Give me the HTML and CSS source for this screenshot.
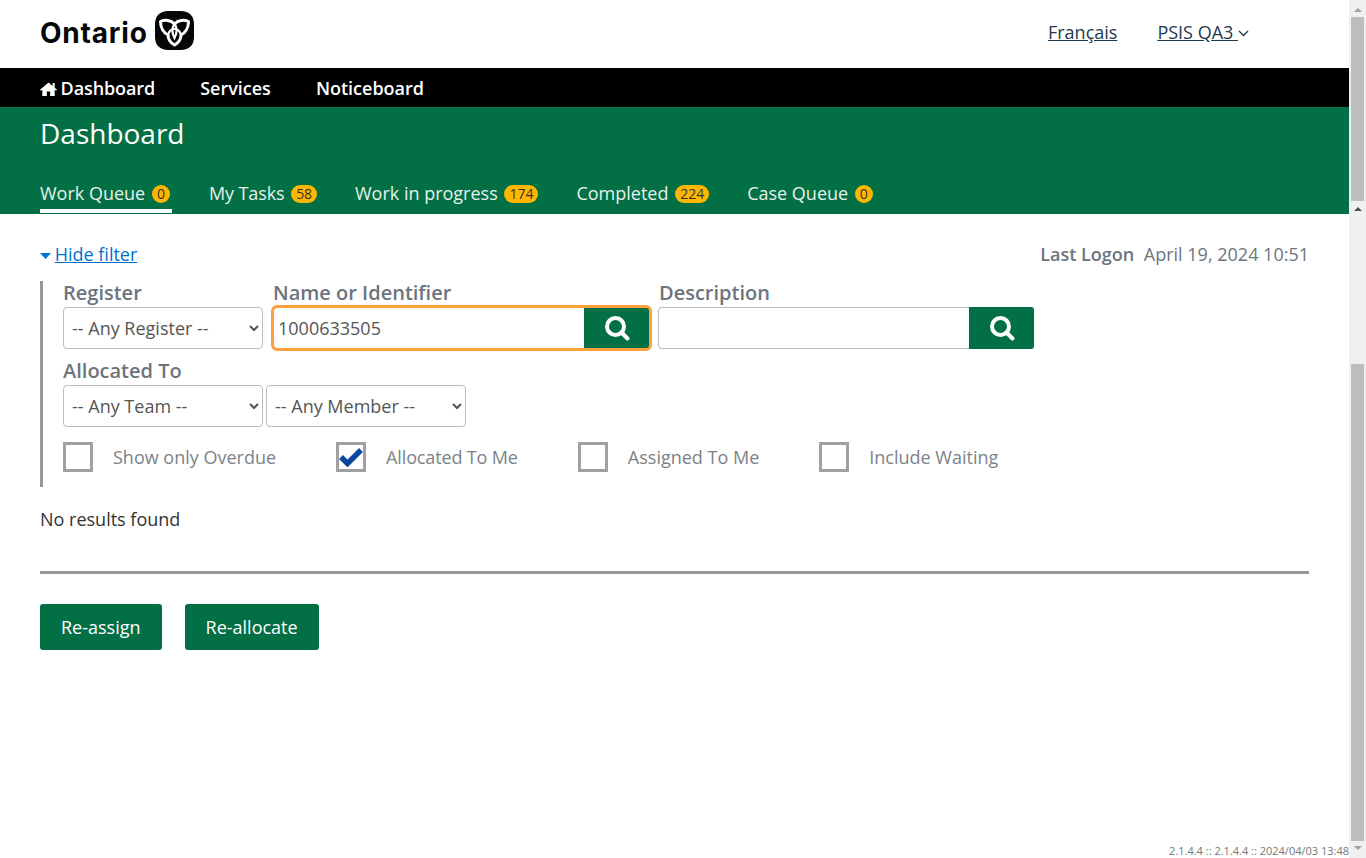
FILE: index.html
```html
<!DOCTYPE html>
<html lang="en">
<head>
    <meta charset="UTF-8">
    <meta name="viewport" content="width=device-width, initial-scale=1.0">
    <title>Dashboard</title>
    <link rel="stylesheet" href="styles.css">
</head>
<body>
<div class="page">
    <div class="main">
        <header class="top">
            <div class="logo">
                <span class="logo-word">Ontario</span>
                <svg class="logo-mark" width="39" height="39" viewBox="0 0 39 39">
                    <path d="M13 0h13c8 0 13 5 13 13v13c0 8-5 13-13 13H13C5 39 0 34 0 26V13C0 5 5 0 13 0z" fill="#060808"/>
                    <path d="M5.500 10.500C10 8.500 16 9 19.500 13 23 9 29 8.500 33.500 10.500 33.500 17 30 22 26 24 26 28 23 32 19.500 34 16 32 13 28 13 24 9 22 5.500 17 5.500 10.500z" fill="none" stroke="#fff" stroke-width="3" stroke-linejoin="round"/>
                    <path d="M13 24C14 20 17 18 19.500 18 22 18 25 20 26 24M19.500 13C17 16 16.500 21 19.500 27 22.500 21 22 16 19.500 13z" fill="none" stroke="#fff" stroke-width="2.200"/>
                </svg>
            </div>
            <div class="top-links">
                <a href="#">Français</a>
                <a href="#">PSIS QA3 <svg class="chev" width="11" height="7" viewBox="0 0 11 7"><path d="M1 1l4.500 4.500L10 1" fill="none" stroke="#1c3a50" stroke-width="1.400"/></svg></a>
            </div>
        </header>
        <nav class="nav">
            <a href="#" class="nav-home">
                <svg width="17" height="14" viewBox="0 0 17 14"><path d="M8.500 0.500L0 7.700l1 1.100 1.300-1.100V14h4.500V9.500h3.400V14h4.500V7.700l1.300 1.100 1-1.100-2.300-2V1h-2v3L8.500 0.500z" fill="#fff"/></svg>
                Dashboard
            </a>
            <a href="#">Services</a>
            <a href="#">Noticeboard</a>
        </nav>
        <section class="banner">
            <h1>Dashboard</h1>
            <div class="tabs">
                <a href="#" class="tab tab-active">Work Queue <span class="badge">0</span></a>
                <a href="#" class="tab tab-tight">My Tasks <span class="badge">58</span></a>
                <a href="#" class="tab">Work in progress <span class="badge">174</span></a>
                <a href="#" class="tab">Completed <span class="badge">224</span></a>
                <a href="#" class="tab">Case Queue <span class="badge">0</span></a>
            </div>
        </section>
        <section class="content">
            <div class="filter-head">
                <div class="toggle">
                    <svg width="11" height="6" viewBox="0 0 11 6"><path d="M0 0h11L5.500 6z" fill="#0071ce"/></svg>
                    <a href="#">Hide filter</a>
                </div>
                <div class="logon"><b>Last Logon</b> April 19, 2024 10:51</div>
            </div>
            <div class="filter">
                <div class="row">
                    <div class="field">
                        <label>Register</label>
                        <select><option>-- Any Register --</option></select>
                    </div>
                    <div class="field field-name">
                        <label>Name or Identifier</label>
                        <div class="search search-focus">
                            <input type="text" value="1000633505">
                            <button type="button" aria-label="Search">
                                <svg width="26" height="26" viewBox="0 0 26 26"><circle cx="11.500" cy="11.500" r="8.500" fill="none" stroke="#fff" stroke-width="4"/><path d="M17.500 17.500l6 6" stroke="#fff" stroke-width="4" stroke-linecap="round"/></svg>
                            </button>
                        </div>
                    </div>
                    <div class="field field-desc">
                        <label>Description</label>
                        <div class="search">
                            <input type="text">
                            <button type="button" aria-label="Search">
                                <svg width="26" height="26" viewBox="0 0 26 26"><circle cx="11.500" cy="11.500" r="8.500" fill="none" stroke="#fff" stroke-width="4"/><path d="M17.500 17.500l6 6" stroke="#fff" stroke-width="4" stroke-linecap="round"/></svg>
                            </button>
                        </div>
                    </div>
                </div>
                <div class="field alloc">
                    <label>Allocated To</label>
                    <div class="alloc-selects">
                        <select><option>-- Any Team --</option></select>
                        <select><option>-- Any Member --</option></select>
                    </div>
                </div>
                <div class="checks">
                    <div class="check"><span class="box"></span>Show only Overdue</div>
                    <div class="check check-tight"><span class="box"><svg width="24" height="20" viewBox="0 0 24 20"><path d="M2 10l6.500 6.500L22 3" fill="none" stroke="#0b46a0" stroke-width="5.500"/></svg></span>Allocated To Me</div>
                    <div class="check"><span class="box"></span>Assigned To Me</div>
                    <div class="check"><span class="box"></span>Include Waiting</div>
                </div>
            </div>
            <p class="empty">No results found</p>
            <hr>
            <div class="actions">
                <button type="button" class="btn">Re-assign</button>
                <button type="button" class="btn">Re-allocate</button>
            </div>
        </section>
        <div class="version">2.1.4.4 :: 2.1.4.4 :: 2024/04/03 13:48</div>
    </div>
    <div class="scrollbar">
        <div class="sb-top">
            <span class="arrow-up"></span>
            <div class="sb-thumb-top"></div>
            <span class="arrow-up arrow-dark"></span>
        </div>
        <div class="sb-bottom">
            <div class="sb-thumb-bottom"></div>
            <span class="arrow-down"></span>
        </div>
    </div>
</div>
</body>
</html>
```

FILE: styles.css
```css
* {
    box-sizing: border-box;
}
html, body {
    margin: 0;
    height: 100%;
    overflow: hidden;
}
body {
    font-family: "Open Sans", sans-serif;
    font-size: 18px;
    color: #333;
    background-color: #fff;
}
.page {
    display: flex;
    height: 858px;
}
.main {
    flex: 1;
    display: flex;
    flex-direction: column;
    min-width: 0;
}

/* header */
.top {
    height: 68px;
    display: flex;
    justify-content: space-between;
    padding: 11px 100px 0 40px;
}
.logo {
    display: flex;
    align-items: flex-start;
    gap: 7px;
}
.logo-word {
    font-family: Inter, sans-serif;
    font-weight: 700;
    font-size: 28px;
    letter-spacing: 0.8px;
    line-height: 44px;
    color: #060808;
}
.logo-mark {
    display: block;
}
.top-links {
    display: flex;
    gap: 40px;
    padding-top: 9px;
}
.top-links a {
    color: #1c3a50;
    line-height: 25px;
}
.chev {
    vertical-align: 2px;
}

/* black nav */
.nav {
    height: 39px;
    background-color: #000;
    display: flex;
    align-items: center;
    gap: 45px;
    padding-left: 40px;
}
.nav a {
    color: #fff;
    font-weight: 600;
    text-decoration: none;
}
.nav-home {
    letter-spacing: -0.1px;
}
.nav-home svg {
    vertical-align: -1px;
    margin-right: -1px;
}

/* green banner */
.banner {
    height: 107px;
    background-color: #026f44;
    padding-left: 40px;
    color: #fff;
}
.banner h1 {
    margin: 0;
    font-size: 28px;
    font-weight: 400;
    line-height: 52px;
}
.tabs {
    display: flex;
    gap: 38px;
    margin-top: 17px;
}
.tab {
    color: #e6f2ec;
    text-decoration: none;
    line-height: 25px;
    height: 37px;
    padding-top: 5px;
    border-bottom: 4px solid transparent;
}
.tab-active {
    border-bottom-color: #fff;
    padding-right: 2px;
    margin-right: -1px;
}
.tab-tight {
    letter-spacing: -0.1px;
}
.badge {
    display: inline-block;
    min-width: 18px;
    height: 18px;
    padding: 0 5px;
    margin-left: 2px;
    border-radius: 9px;
    background-color: #ffb600;
    color: #333;
    font-size: 14px;
    line-height: 18px;
    text-align: center;
    vertical-align: 1px;
}

/* content */
.content {
    padding: 0 40px;
}
.filter-head {
    display: flex;
    justify-content: space-between;
    height: 67px;
    padding-top: 28px;
    line-height: 25px;
}
.toggle a {
    color: #0071ce;
}
.toggle svg {
    vertical-align: 2px;
    margin-right: -1px;
}
.logon {
    color: #6c757d;
}
.logon b {
    font-weight: 600;
    margin-right: 5px;
}
.filter {
    border-left: 3px solid #999;
    padding-left: 20px;
    height: 206px;
}
.row {
    display: flex;
}
.field label {
    display: block;
    font-size: 20px;
    font-weight: 600;
    color: #6c757d;
    line-height: 24px;
    margin-bottom: 2px;
}
select {
    width: 200px;
    height: 42px;
    font-family: "Open Sans", sans-serif;
    font-size: 18px;
    color: #555;
    background-color: #fff;
    border: 1px solid #bbb;
    border-radius: 4px;
    padding-left: 4px;
}
.field-name {
    margin-left: 10px;
}
.field-desc {
    margin-left: 8px;
}
.field-desc label {
    padding-left: 1px;
}
.search {
    display: flex;
    width: 376px;
    height: 42px;
    border-radius: 4px;
}
.search-focus {
    width: 377px;
    outline: 3px solid #ffa040;
    outline-offset: -1px;
}
.search input {
    flex: 1;
    min-width: 0;
    height: 42px;
    border: 1px solid #bbb;
    border-right: none;
    border-radius: 4px 0 0 4px;
    font-family: "Open Sans", sans-serif;
    font-size: 18px;
    color: #555;
    padding: 0 4px;
    background-color: #fff;
}
.search button {
    width: 65px;
    height: 42px;
    border: none;
    border-radius: 0 3px 3px 0;
    background-color: #026f44;
    display: flex;
    align-items: center;
    justify-content: center;
    padding: 0;
}
.search-focus button {
    width: 66px;
}
.alloc {
    margin-top: 10px;
}
.alloc-selects {
    display: flex;
    gap: 3px;
}
.checks {
    display: flex;
    margin-top: 15px;
    gap: 60px;
}
.check {
    display: flex;
    align-items: center;
    gap: 20px;
    color: #7b8389;
    line-height: 30px;
}
.check-tight {
    letter-spacing: -0.14px;
}
.box {
    width: 30px;
    height: 30px;
    border: 3px solid #a0a0a0;
    display: flex;
    align-items: center;
    justify-content: center;
}
.empty {
    margin: 20px 0 0;
    line-height: 25px;
}
hr {
    border: none;
    height: 3px;
    background-color: #999;
    margin: 39px 0 30px;
}
.actions {
    display: flex;
    gap: 23px;
}
.btn {
    height: 46px;
    padding: 0 21px;
    border: none;
    border-radius: 3px;
    background-color: #026f44;
    color: #fff;
    font-family: "Open Sans", sans-serif;
    font-size: 18px;
}
.version {
    margin-top: auto;
    text-align: right;
    font-size: 11px;
    color: #777;
    line-height: 15px;
}

/* the two stacked scrollbars */
.scrollbar {
    width: 17px;
    background-color: #f0f0f0;
    display: flex;
    flex-direction: column;
    align-items: center;
    padding: 0 2px;
}
.sb-top {
    height: 214px;
    width: 100%;
    display: flex;
    flex-direction: column;
    align-items: center;
}
.sb-thumb-top {
    width: 100%;
    height: 184px;
    margin-top: 4px;
    background-color: #bdbdbd;
}
.sb-bottom {
    flex: 1;
    width: 100%;
    display: flex;
    flex-direction: column;
    align-items: center;
}
.sb-thumb-bottom {
    width: 100%;
    height: 477px;
    margin-top: 150px;
    background-color: #bdbdbd;
}
.arrow-up, .arrow-down {
    width: 0;
    height: 0;
    border-left: 4px solid transparent;
    border-right: 4px solid transparent;
}
.arrow-up {
    border-bottom: 4px solid #a3a3a3;
    margin-top: 8px;
    margin-bottom: 1px;
}
.arrow-dark {
    border-bottom-color: #505050;
    margin-top: 6px;
}
.arrow-down {
    border-top: 4px solid #a3a3a3;
    margin-top: 5px;
}
```
